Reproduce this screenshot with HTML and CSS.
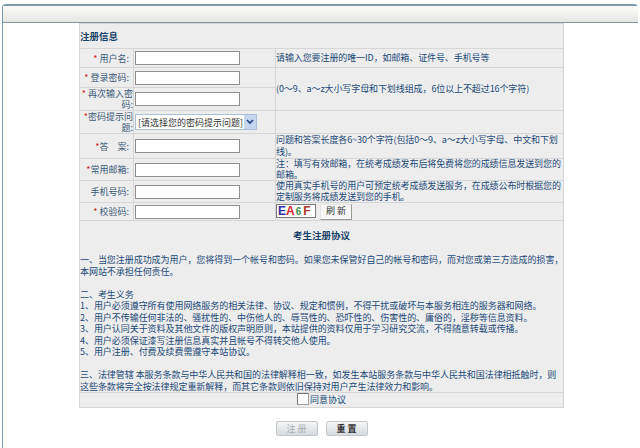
FILE: index.html
```html
<!DOCTYPE html>
<html lang="zh-CN">
<head>
<meta charset="utf-8">
<title>注册信息</title>
<link rel="stylesheet" href="styles.css">
</head>
<body>
<div class="frame">
  <div class="frame-head"></div>
  <div class="frame-body">
    <table class="form">
      <colgroup><col class="c-label"><col class="c-input"><col class="c-hint"></colgroup>
      <tr class="r-head"><th colspan="3" class="section">注册信息</th></tr>
      <tr class="r1">
        <td class="label"><span class="req">*</span> 用户名:</td>
        <td><input class="field" type="text"></td>
        <td class="hint">请输入您要注册的唯一ID，如邮箱、证件号、手机号等</td>
      </tr>
      <tr class="r2">
        <td class="label"><span class="req">*</span> 登录密码:</td>
        <td><input class="field" type="password"></td>
        <td class="hint" rowspan="2">(0～9、a～z大小写字母和下划线组成，6位以上不超过16个字符)</td>
      </tr>
      <tr class="r3">
        <td class="label label-wrap"><span class="req">*</span> 再次输入密码:</td>
        <td><input class="field" type="password"></td>
      </tr>
      <tr class="r4">
        <td class="label label-wrap"><span class="req">*</span>密码提示问题:</td>
        <td><div class="select"><span class="select-text">[请选择您的密码提示问题]</span><span class="select-arrow"><svg width="8" height="6" viewBox="0 0 8 6"><path d="M1 1l3 3 3-3" fill="none" stroke="#1f3f8f" stroke-width="1.6"/></svg></span></div></td>
        <td></td>
      </tr>
      <tr class="r5">
        <td class="label"><span class="req">*</span>答&emsp;案:</td>
        <td><input class="field" type="text"></td>
        <td class="hint hint-loose">问题和答案长度各6~30个字符(包括0～9、a～z大小写字母、中文和下划<br>线)。</td>
      </tr>
      <tr class="r6">
        <td class="label"><span class="req">*</span>常用邮箱:</td>
        <td><input class="field" type="text"></td>
        <td class="hint">注：填写有效邮箱，在统考成绩发布后将免费将您的成绩信息发送到您的<br>邮箱。</td>
      </tr>
      <tr class="r7">
        <td class="label">手机号码:</td>
        <td><input class="field" type="text"></td>
        <td class="hint">使用真实手机号的用户可预定统考成绩发送服务，在成绩公布时根据您的<br>定制服务将成绩发送到您的手机。</td>
      </tr>
      <tr class="r8">
        <td class="label"><span class="req">*</span> 校验码:</td>
        <td><input class="field" type="text"></td>
        <td class="hint"><div class="captcha-row"><span class="captcha"><b class="c1">E</b><b class="c2">A</b><b class="c3">6</b><b class="c4">F</b></span><button class="refresh" type="button">刷 新</button></div></td>
      </tr>
      <tr>
        <td colspan="3" class="agreement">
          <h2 class="agree-title">考生注册协议</h2>
          <p>一、当您注册成功成为用户，您将得到一个帐号和密码。如果您未保管好自己的帐号和密码，而对您或第三方造成的损害，<br>本网站不承担任何责任。</p>
          <p>二、考生义务<br>1、用户必须遵守所有使用网络服务的相关法律、协议、规定和惯例，不得干扰或破坏与本服务相连的服务器和网络。<br>2、用户不传输任何非法的、骚扰性的、中伤他人的、辱骂性的、恐吓性的、伤害性的、庸俗的，淫秽等信息资料。<br>3、用户认同关于资料及其他文件的版权声明原则，本站提供的资料仅用于学习研究交流，不得随意转载或传播。<br>4、用户必须保证漆写注册信息真实并且帐号不得转交他人使用。<br>5、用户注册、付费及续费需遵守本站协议。</p>
          <p>三、法律管辖 本服务条款与中华人民共和国的法律解释相一致，如发生本站服务条款与中华人民共和国法律相抵触时，则<br>这些条款将完全按法律规定重新解释，而其它条款则依旧保持对用户产生法律效力和影响。</p>
        </td>
      </tr>
      <tr class="r-agree">
        <td colspan="3" class="agree-check"><label><input class="check" type="checkbox">同意协议</label></td>
      </tr>
    </table>
    <div class="actions">
      <button class="btn btn-off" type="button">注 册</button>
      <button class="btn" type="button">重 置</button>
    </div>
  </div>
</div>
</body>
</html>
```
FILE: styles.css
```css
* { box-sizing: border-box; }
html, body { height: 100%; }
body {
  margin: 0;
  overflow: hidden;
  background: #fff;
  font-family: "Noto Sans CJK SC", "Liberation Sans", sans-serif;
  font-size: 9px;
  color: #1c4a78;
}
.frame {
  margin: 4px 2px 0 2px;
  height: 444px;
  border-left: 1px solid #7f9aa8;
  border-top: 2px solid #7f9aa8;
  border-top-left-radius: 4px;
  border-top-right-radius: 4px;
}
.frame-head {
  height: 17px;
  background: linear-gradient(#fbfbf9, #e6e6e2);
  border-bottom: 1px solid #7f98a4;
}
.frame-body { padding-left: 76px; }
.form {
  width: 485px;
  table-layout: fixed;
  border-collapse: collapse;
  background: #ededed;
  border: 1px solid #cfcfcf;
}
.c-label { width: 54px; }
.c-input { width: 142px; }
.form td, .form th {
  padding: 0;
  border: 1px solid #d6d6d6;
  line-height: 11px;
}
.r-head { height: 25px; }
.r1 { height: 19px; }
.r2 { height: 20px; }
.r3 { height: 22px; }
.r4 { height: 23px; }
.r5 { height: 24px; }
.r6 { height: 21px; }
.r7 { height: 21px; }
.r8 { height: 18px; }
.r-agree { height: 14px; }
.section {
  text-align: left;
  font-size: 9.5px;
  font-weight: 700;
  color: #153f68;
}
.form .label {
  text-align: right;
  padding-right: 4px;
  color: #3a5a78;
}
.form .label-wrap { padding-right: 0; }
.req { color: #d0201c; }
.form .hint {
  padding: 0;
  vertical-align: middle;
  line-height: 10.5px;
  letter-spacing: -0.1px;
  white-space: nowrap;
}
.form .hint-loose { line-height: 12px; }
.field {
  display: block;
  width: 105px;
  height: 14px;
  margin: 0 0 0 1px;
  padding: 0;
  background: #fff;
  border: 1px solid #8f8f8f;
  border-radius: 0;
}
.select {
  display: flex;
  width: 122px;
  height: 16px;
  margin-left: 1px;
  background: #fff;
  border: 1px solid #a9c0d8;
  align-items: center;
  color: #333;
}
.select-text { flex: 1; padding-left: 2px; white-space: nowrap; }
.select-arrow {
  display: flex;
  width: 12px;
  height: 14px;
  align-items: center;
  justify-content: center;
  background: #c6d6ec;
}
.captcha-row { display: flex; align-items: flex-start; gap: 4px; }
.captcha {
  display: block;
  width: 40px;
  height: 14px;
  padding-left: 1px;
  background: #fff;
  border: 1px solid #7a7a7a;
  font-family: "Liberation Sans", sans-serif;
  font-size: 12px;
  line-height: 12px;
  letter-spacing: 0;
  white-space: nowrap;
}
.c1 { color: #2c2fa8; }
.c2 { color: #d8232a; }
.c3 { color: #3f8f4f; font-size: 10px; margin-left: 1px; }
.c4 { color: #a83224; margin-left: 2px; }
.refresh {
  width: 32px;
  height: 16px;
  padding: 0;
  background: #f6f6f6;
  border: 1px solid #e4e4e4;
  border-right-color: #9a9a9a;
  border-bottom-color: #9a9a9a;
  font: inherit;
  color: #333;
}
.form .agreement { padding: 7px 0 0; vertical-align: top; }
.agree-title {
  margin: 0 0 12px;
  text-align: center;
  font-size: 9.5px;
  line-height: 14px;
  font-weight: 700;
  color: #153f68;
}
.agreement p {
  margin: 0 0 11.5px;
  line-height: 11.5px;
  letter-spacing: -0.05px;
  white-space: nowrap;
}
.agreement p:last-child { margin: 0; }
.agree-check { text-align: center; }
.agree-check label { display: inline-flex; align-items: center; gap: 1px; }
.check {
  appearance: none;
  width: 12px;
  height: 12px;
  margin: 0;
  background: #fff;
  border: 1px solid #a0a0a0;
  border-top-color: #777;
  border-left-color: #777;
}
.actions {
  display: flex;
  justify-content: center;
  gap: 8px;
  width: 485px;
  margin-top: 13px;
}
.btn {
  width: 42px;
  height: 15px;
  padding: 0;
  border: 1px solid #c4c8cc;
  border-radius: 2px;
  background: linear-gradient(#f6f6f6, #d6dade);
  font: inherit;
  font-weight: 700;
  line-height: 13px;
  color: #333;
}
.btn-off { font-weight: 400; color: #a8b0b4; }
```
